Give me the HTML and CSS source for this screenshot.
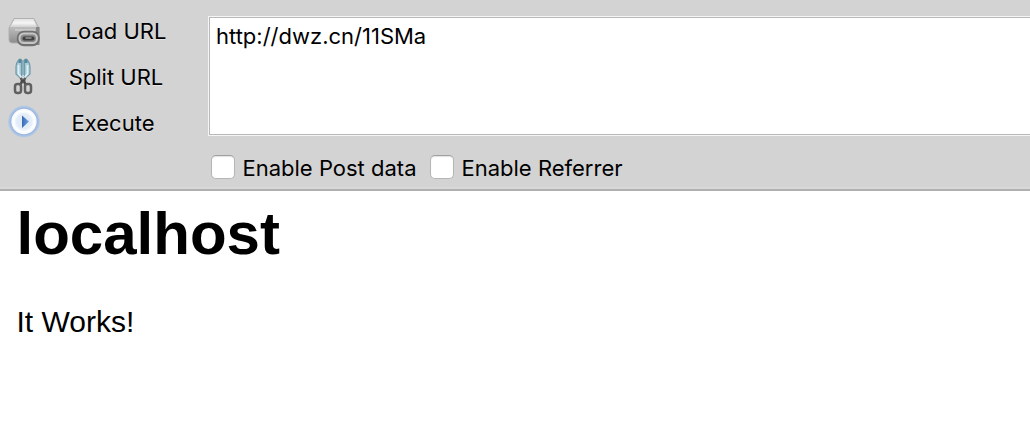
FILE: index.html
```html
<!DOCTYPE html>
<html lang="en">
<head>
<meta charset="utf-8">
<title>localhost</title>
<link rel="stylesheet" href="styles.css">
</head>
<body>
<section class="toolbar">
  <nav class="actions">
    <div class="action">
      <svg class="icon" width="36" height="36" viewBox="0 0 36 36">
        <defs>
          <linearGradient id="lid" x2="0" y2="1"><stop stop-color="#e2e2e2"/><stop offset=".5" stop-color="#f6f6f6"/><stop offset="1" stop-color="#d0d0d0"/></linearGradient>
          <linearGradient id="box" x2="0" y2="1"><stop stop-color="#d8d8d8"/><stop offset="1" stop-color="#8c8c8c"/></linearGradient>
          <filter id="soft"><feGaussianBlur stdDeviation=".5"/></filter>
        </defs>
        <g filter="url(#soft)">
          <path d="M9 5.500H29L34 15V27Q34 30 31 30H7Q4 30 4 27V15Z" fill="url(#box)" stroke="#b0b0b0"/>
          <path d="M10 6H28L32 14H5Z" fill="url(#lid)"/>
          <path d="M10 17H30" stroke="#c9c9c9" stroke-width="2"/>
          <path d="M31 14H34.500V32H31Z" fill="#868686"/>
          <rect x="14" y="20" width="18.500" height="11" rx="5" fill="#888" stroke="#707070" stroke-width="4.500"/>
          <rect x="14.500" y="20.500" width="17.500" height="9.500" rx="4.500" fill="#888" stroke="#c6c6c6" stroke-width="2"/>
          <path d="M19.500 25.500H27.500" stroke="#3f3f3f" stroke-width="4" stroke-linecap="round"/>
          <path d="M20.500 25H26.500" stroke="#999" stroke-width="1.500"/>
        </g>
      </svg>
      <span class="label">Load URL</span>
    </div>
    <div class="action">
      <svg class="icon" width="36" height="40" viewBox="0 0 36 40">
        <g filter="url(#soft)" fill="none">
          <path d="M15 2Q11 5 11 10V17L16.500 22V3ZM21 2Q25 5 25 10V17L19.500 22V3Z" fill="#a8ccd9" stroke="#7198a8" stroke-width="1.200"/>
          <path d="M15 2.500V6M21 2.500V6" stroke="#56889d" stroke-width="3"/>
          <path d="M13.500 8V17L17 21M22.500 8V17L19 21" stroke="#dceff5" stroke-width="1.800"/>
          <path d="M18 3V18" stroke="#8cb0be" stroke-width="2.200"/>
          <path d="M15.500 21L18 24L20.500 21" stroke="#5c5c5c" stroke-width="2.500"/>
          <path d="M17 23Q17 26 15 28M19 23Q19 26 21 28" stroke="#4b4b4b" stroke-width="2.500"/>
          <rect x="10" y="27" width="6" height="9" rx="2.500" stroke="#606060" stroke-width="2.500"/>
          <rect x="20" y="27" width="6" height="9" rx="2.500" stroke="#606060" stroke-width="2.500"/>
        </g>
      </svg>
      <span class="label">Split URL</span>
    </div>
    <div class="action">
      <svg class="icon" width="36" height="36" viewBox="0 0 36 36">
        <defs>
          <radialGradient id="glow"><stop offset=".78" stop-color="#94b0da"/><stop offset=".9" stop-color="#a9c2e5"/><stop offset="1" stop-color="#c0cede"/></radialGradient>
          <radialGradient id="face"><stop stop-color="#dce8f6"/><stop offset=".6" stop-color="#e4eef9"/><stop offset=".8" stop-color="#fff"/><stop offset="1" stop-color="#f3f7fc"/></radialGradient>
          <linearGradient id="play" x2="1"><stop stop-color="#3568b5"/><stop offset="1" stop-color="#77a4e0"/></linearGradient>
        </defs>
        <g filter="url(#soft)">
          <circle cx="19" cy="16.500" r="16" fill="url(#glow)"/>
          <circle cx="19" cy="16.500" r="12.700" fill="url(#face)"/>
          <path d="M17 10.500L24 16.500L17 23Z" fill="url(#play)"/>
        </g>
      </svg>
      <span class="label execute">Execute</span>
    </div>
  </nav>
  <div class="request">
    <div class="url">http://dwz.cn/11SMa</div>
    <div class="options">
      <span class="check"></span><span class="post">Enable Post data</span>
      <span class="check"></span><span class="referrer">Enable Referrer</span>
    </div>
  </div>
</section>
<main class="page">
  <h1 class="title">localhost</h1>
  <p class="message">It Works!</p>
</main>
</body>
</html>
```
FILE: styles.css
```css
body {
  margin: 0;
  background: #fff;
  color: #000;
  overflow: hidden;
}
.toolbar {
  box-sizing: border-box;
  height: 191px;
  display: flex;
  background: #d3d3d3;
  border-bottom: 2px solid #b0b0b0;
  box-shadow: inset 0 -2px #d8d8d8;
  font: 22px/46px Inter, "Liberation Sans", sans-serif;
  white-space: nowrap;
}
.actions {
  width: 208px;
  padding-top: 8px;
  flex: none;
}
.action {
  height: 46px;
  display: flex;
  align-items: center;
  padding-left: 5px;
}
.icon {
  flex: none;
}
.label {
  width: 150px;
  text-align: center;
  text-shadow: 0 1px #e6e6e6;
}
.execute {
  width: 144px;
}
.request {
  flex: 1;
  padding-top: 16px;
}
.url {
  box-sizing: border-box;
  height: 120px;
  margin-right: -2px;
  padding: 4px 0 0 7px;
  line-height: 31px;
  background: #fff;
  border: 1px solid #f5f5f5;
  box-shadow: inset 0 0 0 1px #b9b9b9;
}
.options {
  display: flex;
  align-items: center;
  height: 46px;
  margin-top: 9px;
  padding-left: 3px;
}
.check {
  box-sizing: border-box;
  width: 24px;
  height: 24px;
  margin-bottom: 3px;
  border: 1px solid #b5b5b5;
  border-top-color: #a0a0a0;
  border-radius: 5px;
  background: #fff;
  box-shadow: inset 0 1px 1px #e3e3e3;
}
.post {
  width: 187px;
  padding-left: 7.5px;
  box-sizing: border-box;
  margin-right: 8px;
}
.referrer {
  padding-left: 7.5px;
}
.page {
  padding: 9px 16.5px;
  font-family: "Liberation Sans", Arial, sans-serif;
}
.title {
  margin: 0;
  font-size: 60px;
  line-height: 68px;
}
.message {
  margin: 37px 0 0;
  font-size: 30px;
  line-height: 34px;
}
```
